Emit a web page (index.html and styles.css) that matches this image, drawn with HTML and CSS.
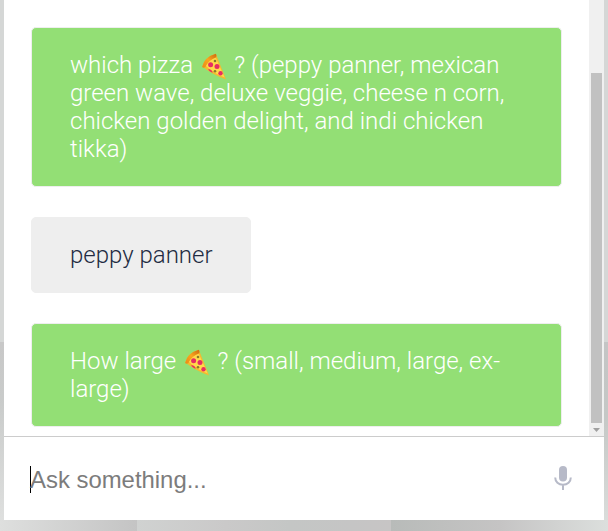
FILE: index.html
```
<!DOCTYPE html>
<html lang="en">
<head>
<meta charset="utf-8">
<title>Pizza chat</title>
<link rel="stylesheet" href="styles.css">
</head>
<body>
<svg class="defs" aria-hidden="true">
  <defs>
    <linearGradient id="crust" x1="0" y1="1" x2="1" y2="0"><stop offset="0" stop-color="#e98a18"/><stop offset=".5" stop-color="#f9a51e"/><stop offset="1" stop-color="#c96a12"/></linearGradient>
    <symbol id="pizza" viewBox="0 0 26 28">
      <path d="M1.2 13.2Q5 3.5 14.8.8L25 26.4Q10 21 1.2 13.2z" fill="#f6b92f"/>
      <path d="M4.5 12.5Q8 6 14.4 4L23.7 24.6Q12 20 4.5 12.5z" fill="#ffd94a"/>
      <path d="M1.1 14Q3 4 14.8.7q1 1.300.5 3.600Q7.500 7 4.300 14.300q-2 .8-3.200-.3z" fill="url(#crust)"/>
      <g fill="#e62e62"><circle cx="9.600" cy="11.800" r="2.500"/><circle cx="16" cy="13.500" r="2.500"/><circle cx="19.500" cy="20.200" r="2.200"/><path d="M7 16.500q3-1.200 4.600 2.600l-.3.600q-3-1.200-4.300-3.200z"/></g>
      <g fill="#8a7a28"><circle cx="14" cy="8" r="1.300"/><circle cx="14" cy="18.300" r="1.300"/></g>
    </symbol>
  </defs>
</svg>
<main class="panel">
  <section class="messages">
    <div class="thread">
      <div class="bubble bot">which pizza <svg class="pizza" role="img" aria-label="pizza"><use href="#pizza"/></svg> ? (peppy panner, mexican green wave, deluxe veggie, cheese n corn, chicken golden delight, and indi chicken tikka)</div>
      <div class="bubble user">peppy panner</div>
      <div class="bubble bot">How large <svg class="pizza" role="img" aria-label="pizza"><use href="#pizza"/></svg> ? (small, medium, large, ex-large)</div>
    </div>
    <div class="scrollbar">
      <div class="thumb"></div>
      <svg class="arrow" viewBox="0 0 7 4"><path d="M0 0h7L3.500 4z"/></svg>
    </div>
  </section>
  <div class="composer">
    <span class="caret"></span>
    <span class="placeholder">Ask something...</span>
    <svg class="mic" viewBox="0 0 18 26"><rect x="5" y="1" width="8" height="15.500" rx="4" fill="#b7bac8"/><path d="M1.200 12.500c0 4.300 3.300 7.300 7.800 7.300s7.800-3 7.800-7.300M9 20v5" fill="none" stroke="#b7bac8" stroke-width="2"/></svg>
  </div>
</main>
</body>
</html>
```
FILE: styles.css
```
* { box-sizing: border-box; }
body {
  margin: 0;
  height: 531px;
  overflow: hidden;
  padding: 0 4px;
  background:
    linear-gradient(90deg, #dedfde, #c4c4c4) 0 100% / 137px 11px no-repeat,
    linear-gradient(90deg, #d0d2d1, #cac9c9 35%, #c4c6c5 60%, #c5c5c5 85%, #c7c5c5) 137px 100% / 254px 11px no-repeat,
    linear-gradient(90deg, #b8bbb9, #c5c4c4 50%, #dcdfdd) 391px 100% / 217px 11px no-repeat,
    linear-gradient(#c8c8c8, #c9cbca 30%, #e0e1e0) 0 342px / 4px 189px no-repeat,
    linear-gradient(#c4c5c5, #c5c8c6 40%, #dcdfdd) 604px 342px / 4px 189px no-repeat,
    #d5d7d6;
}
.defs { position: absolute; width: 0; height: 0; }
.panel {
  display: flex;
  flex-direction: column;
  height: 520px;
  background: #fff;
}
.messages { display: flex; height: 436px; }
.thread {
  display: flex;
  flex: 1;
  flex-direction: column;
  align-items: flex-start;
  gap: 30px;
  padding: 27px 27px 0;
}
.bubble {
  padding: 23px 38px;
  border: 1px solid #eee;
  border-radius: 5px;
  font: 300 24px/28px Roboto, sans-serif;
}
.bot { width: 531px; background: #93df75; color: #fff; }
.user { width: 220px; background: #eee; color: #222b42; white-space: nowrap; }
.pizza {
  width: 26px;
  height: 28px;
  margin: -8px 1.500px -4px 2px;
  vertical-align: -4px;
}
.scrollbar {
  display: flex;
  flex-direction: column;
  align-items: center;
  width: 15px;
  padding-top: 73px;
  background: #f0f0f0;
}
.thumb { width: 11px; height: 350px; background: #c1c1c1; }
.arrow { width: 7px; height: 4px; margin-top: 5px; fill: #a0a0a0; }
.composer {
  display: flex;
  align-items: center;
  height: 84px;
  padding: 2px 32px 0 26px;
  border-top: 1px solid #ccc;
  font: 23.900px/28px "Liberation Sans", Arial, sans-serif;
}
.caret { width: 1px; height: 27px; margin-right: -1px; background: #000; }
.placeholder { flex: 1; color: #7c7c7c; }
.mic { width: 18px; height: 26px; margin-top: -3px; }
```
